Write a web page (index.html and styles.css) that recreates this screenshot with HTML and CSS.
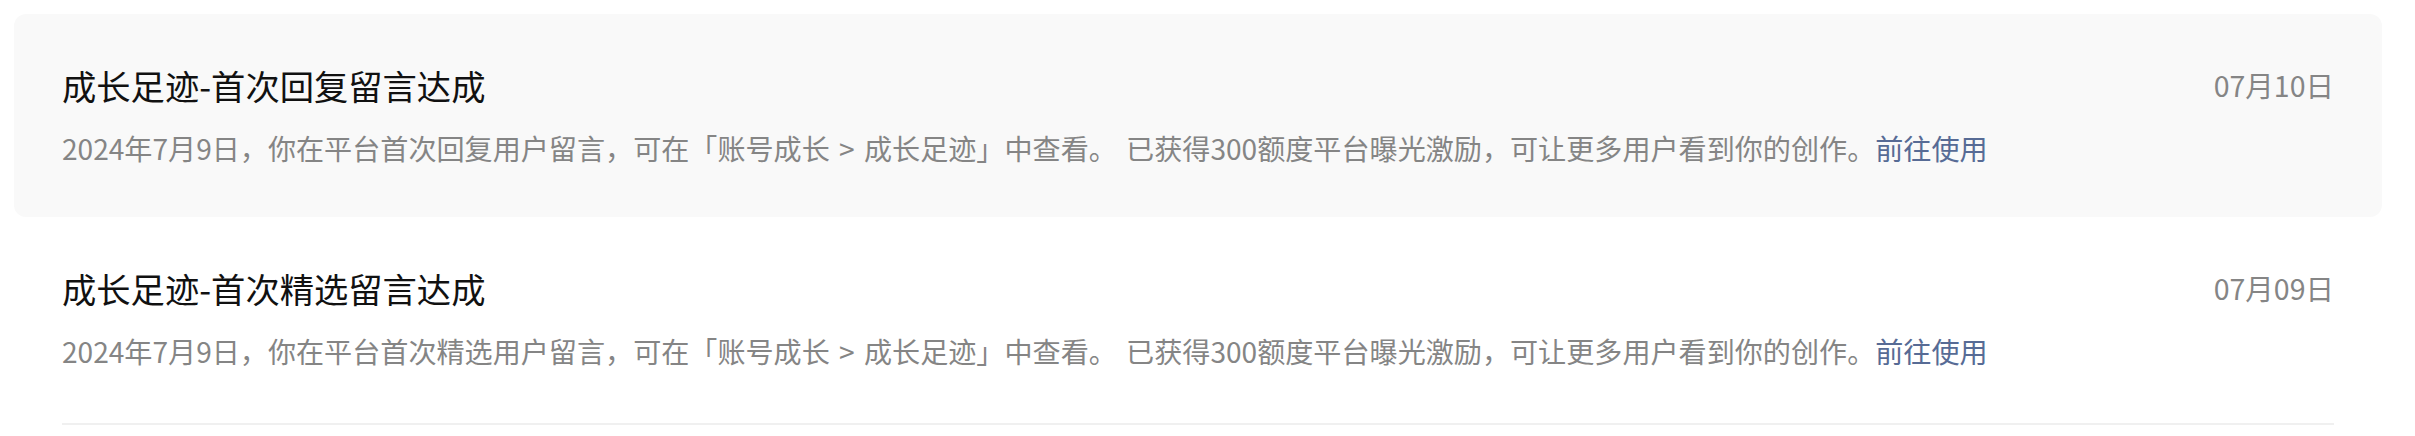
FILE: index.html
```html
<!DOCTYPE html>
<html lang="zh-CN">
<head>
<meta charset="utf-8">
<title>通知</title>
<link rel="stylesheet" href="styles.css">
</head>
<body>
<div class="list">
  <div class="item item--active">
    <div class="item-body">
      <div class="item-head">
        <div class="item-title">成长足迹-首次回复留言达成</div>
        <div class="item-date">07月10日</div>
      </div>
      <div class="item-desc">2024年7月9日，你在平台首次回复用户留言，可在「账号成长 &gt; 成长足迹」中查看。 已获得300额度平台曝光激励，可让更多用户看到你的创作。<a class="item-link" href="#">前往使用</a></div>
    </div>
  </div>
  <div class="item">
    <div class="item-body">
      <div class="item-head">
        <div class="item-title">成长足迹-首次精选留言达成</div>
        <div class="item-date">07月09日</div>
      </div>
      <div class="item-desc">2024年7月9日，你在平台首次精选用户留言，可在「账号成长 &gt; 成长足迹」中查看。 已获得300额度平台曝光激励，可让更多用户看到你的创作。<a class="item-link" href="#">前往使用</a></div>
    </div>
  </div>
</div>
</body>
</html>
```

FILE: styles.css
```css
html, body {
  margin: 0;
  padding: 0;
  background: #ffffff;
}

body {
  font-family: "Noto Sans CJK SC", "Noto Sans", sans-serif;
  color: #1a1a1a;
}

.list {
  margin: 14px 33px 0 14px;
}

.item {
  padding: 0 48px;
  border-radius: 12px;
}

.item--active {
  background: #f9f9f9;
}

.item-body {
  padding: 47px 0 51px;
  border-bottom: 2px solid #f0f0f0;
}

.item--active .item-body {
  padding-bottom: 46px;
  border-bottom-color: transparent;
}

.item-head {
  display: flex;
  align-items: center;
  justify-content: space-between;
  height: 48px;
}

.item-title {
  font-size: 34.3px;
  line-height: 48px;
  color: #111111;
}

.item-date {
  font-size: 28.5px;
  line-height: 48px;
  color: #858585;
}

.item-desc {
  margin-top: 18px;
  font-size: 28.1px;
  line-height: 42px;
  color: #858585;
  word-spacing: 3px;
}

.item-link {
  color: #576b95;
  text-decoration: none;
}
```
